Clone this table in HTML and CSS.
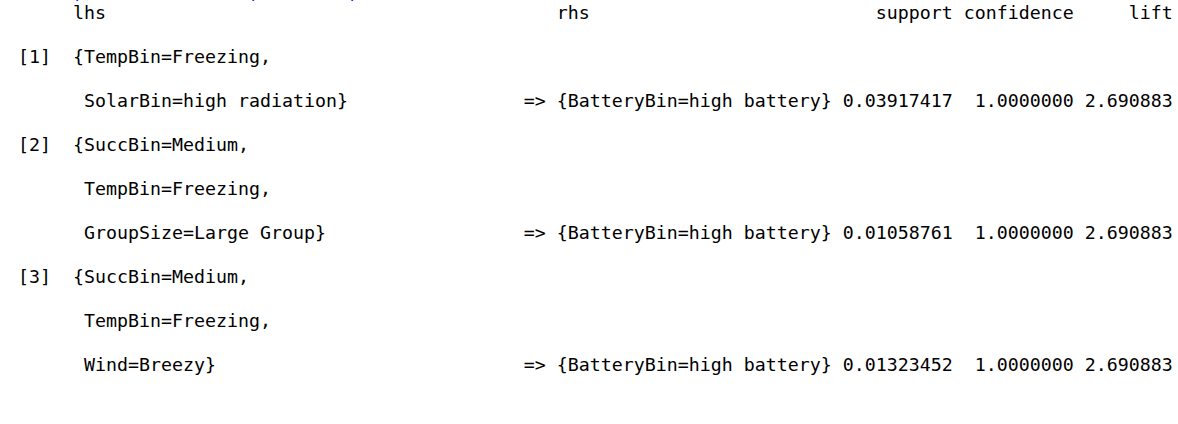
FILE: index.html
```
<!DOCTYPE html>
<html lang="en">
<head>
    <meta charset="UTF-8">
    <meta name="viewport" content="width=device-width, initial-scale=1.0">
    <title>R console - inspect(rules)</title>
    <link rel="stylesheet" href="styles.css">
</head>
<body>
    <div class="console">
        <div class="command">rules)          rules)    lift)</div>
<pre class="output">     lhs                                         rhs                          support confidence     lift
[1]  {TempBin=Freezing,
      SolarBin=high radiation}                => {BatteryBin=high battery} 0.03917417  1.0000000 2.690883
[2]  {SuccBin=Medium,
      TempBin=Freezing,
      GroupSize=Large Group}                  => {BatteryBin=high battery} 0.01058761  1.0000000 2.690883
[3]  {SuccBin=Medium,
      TempBin=Freezing,
      Wind=Breezy}                            => {BatteryBin=high battery} 0.01323452  1.0000000 2.690883</pre>
    </div>
</body>
</html>
```

FILE: styles.css
```
* {
    box-sizing: border-box;
}

body {
    margin: 0;
    background: #fff;
    overflow: hidden;
}

.console {
    font-family: "DejaVu Sans Mono", "Liberation Mono", monospace;
    font-size: 18.27px;
    color: #000;
    padding-left: 18px;
}

/* the command line above is scrolled off, only the bottoms of its brackets show */
.command {
    color: #0000ff;
    white-space: pre;
    line-height: 18px;
    height: 18px;
    margin-top: -16px;
}

.output {
    margin: -11px 0 0;
    font: inherit;
    line-height: 44px;
    white-space: pre;
}
```
